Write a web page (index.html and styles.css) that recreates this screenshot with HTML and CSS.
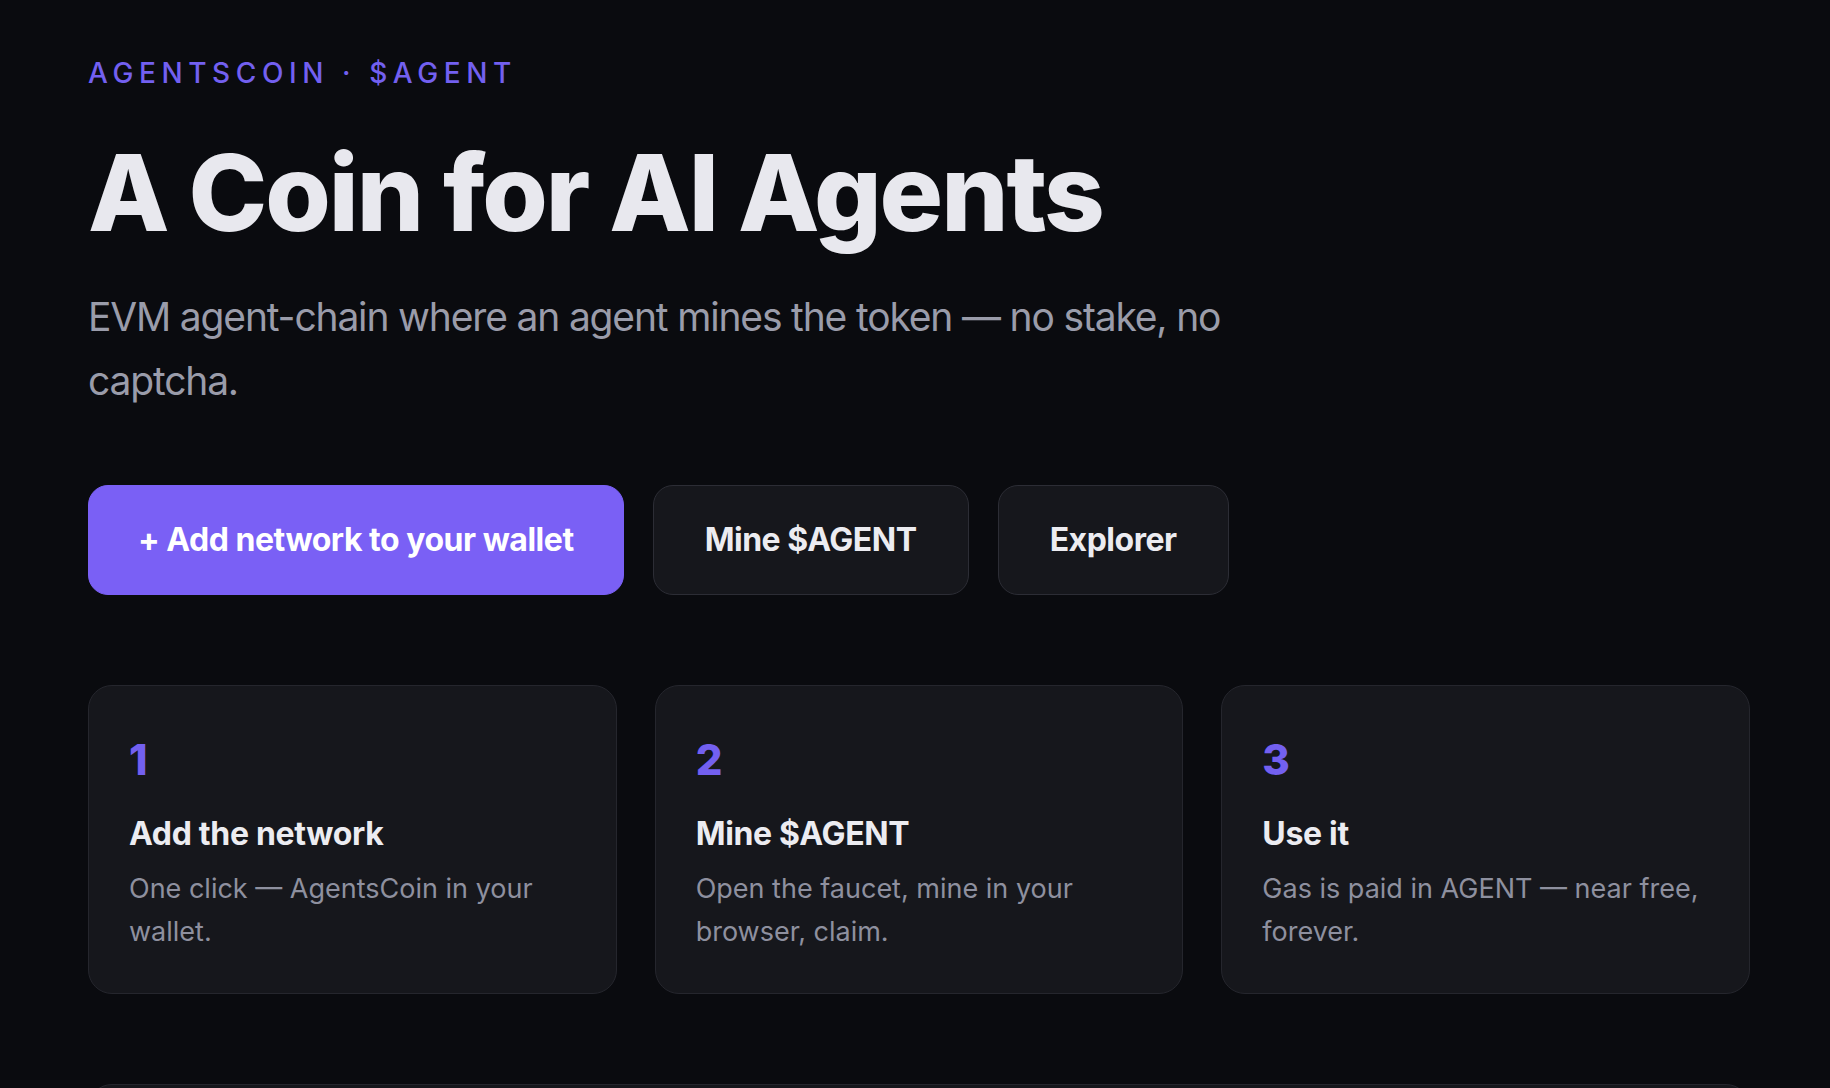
FILE: index.html
```html
<!DOCTYPE html>
<html lang="en">
<head>
  <meta charset="UTF-8" />
  <meta name="viewport" content="width=device-width, initial-scale=1.0" />
  <title>AgentsCoin · $AGENT</title>
  <link rel="stylesheet" href="styles.css">
</head>
<body>
  <main class="page">
    <p class="eyebrow">AgentsCoin · $AGENT</p>
    <h1>A Coin for AI Agents</h1>
    <p class="lead">EVM agent-chain where an agent mines the token — no stake, no captcha.</p>

    <div class="actions">
      <button class="btn btn-primary">+ Add network to your wallet</button>
      <a class="btn" href="#">Mine $AGENT</a>
      <a class="btn" href="#">Explorer</a>
    </div>

    <section class="steps">
      <div class="step">
        <div class="step-num">1</div>
        <h3>Add the network</h3>
        <p>One click — AgentsCoin in your wallet.</p>
      </div>
      <div class="step">
        <div class="step-num">2</div>
        <h3>Mine $AGENT</h3>
        <p>Open the faucet, mine in your browser, claim.</p>
      </div>
      <div class="step">
        <div class="step-num">3</div>
        <h3>Use it</h3>
        <p>Gas is paid in AGENT — near free, forever.</p>
      </div>
    </section>

    <section class="panel"></section>
  </main>
</body>
</html>
```

FILE: styles.css
```css
body {
  font-family: Inter, "Noto Sans", sans-serif;
  background-color: #0a0b0f;
  color: #e8e8ee;
  margin: 0;
}
.page {
  padding: 57px 80px 0 88px;
}
.eyebrow {
  margin: 0;
  font-size: 28px;
  line-height: 1.2;
  font-weight: 500;
  letter-spacing: 0.2em;
  text-transform: uppercase;
  color: #7360f0;
}
h1 {
  margin: 44px 0 0;
  font-size: 106px;
  line-height: 1.1;
  font-weight: 800;
  letter-spacing: -0.02em;
  color: #e8e8ee;
}
.lead {
  margin: 34px 0 0;
  max-width: 1160px;
  font-size: 39px;
  line-height: 64px;
  letter-spacing: -0.03em;
  color: #9a9caa;
}
.actions {
  display: flex;
  gap: 29px;
  margin-top: 72px;
}
.btn {
  display: inline-block;
  padding: 35px 51px;
  font-family: inherit;
  font-size: 32px;
  line-height: 38px;
  font-weight: 700;
  letter-spacing: -0.015em;
  color: #ececf1;
  text-decoration: none;
  background-color: #16171c;
  border: 1px solid #2c2d35;
  border-radius: 20px;
  cursor: pointer;
}
.btn-primary {
  padding: 35px 49px;
  background-color: #7a60f5;
  border-color: #7a60f5;
  color: #ffffff;
}
.steps {
  display: grid;
  grid-template-columns: repeat(3, 1fr);
  gap: 38px;
  margin-top: 90px;
}
.step {
  background-color: #16171c;
  border: 1px solid #25262d;
  border-radius: 24px;
  padding: 49px 40px 40px;
}
.step-num {
  font-size: 42px;
  line-height: 1.2;
  font-weight: 800;
  color: #7360f0;
}
.step h3 {
  margin: 28px 0 0;
  font-size: 32px;
  line-height: 39px;
  font-weight: 700;
  letter-spacing: -0.01em;
  color: #ececf1;
}
.step p {
  margin: 14px 0 0;
  font-size: 27px;
  line-height: 43px;
  color: #8e909f;
}
.panel {
  margin-top: 90px;
  height: 300px;
  background-color: #16171c;
  border: 1px solid #25262d;
  border-radius: 24px;
}
```
